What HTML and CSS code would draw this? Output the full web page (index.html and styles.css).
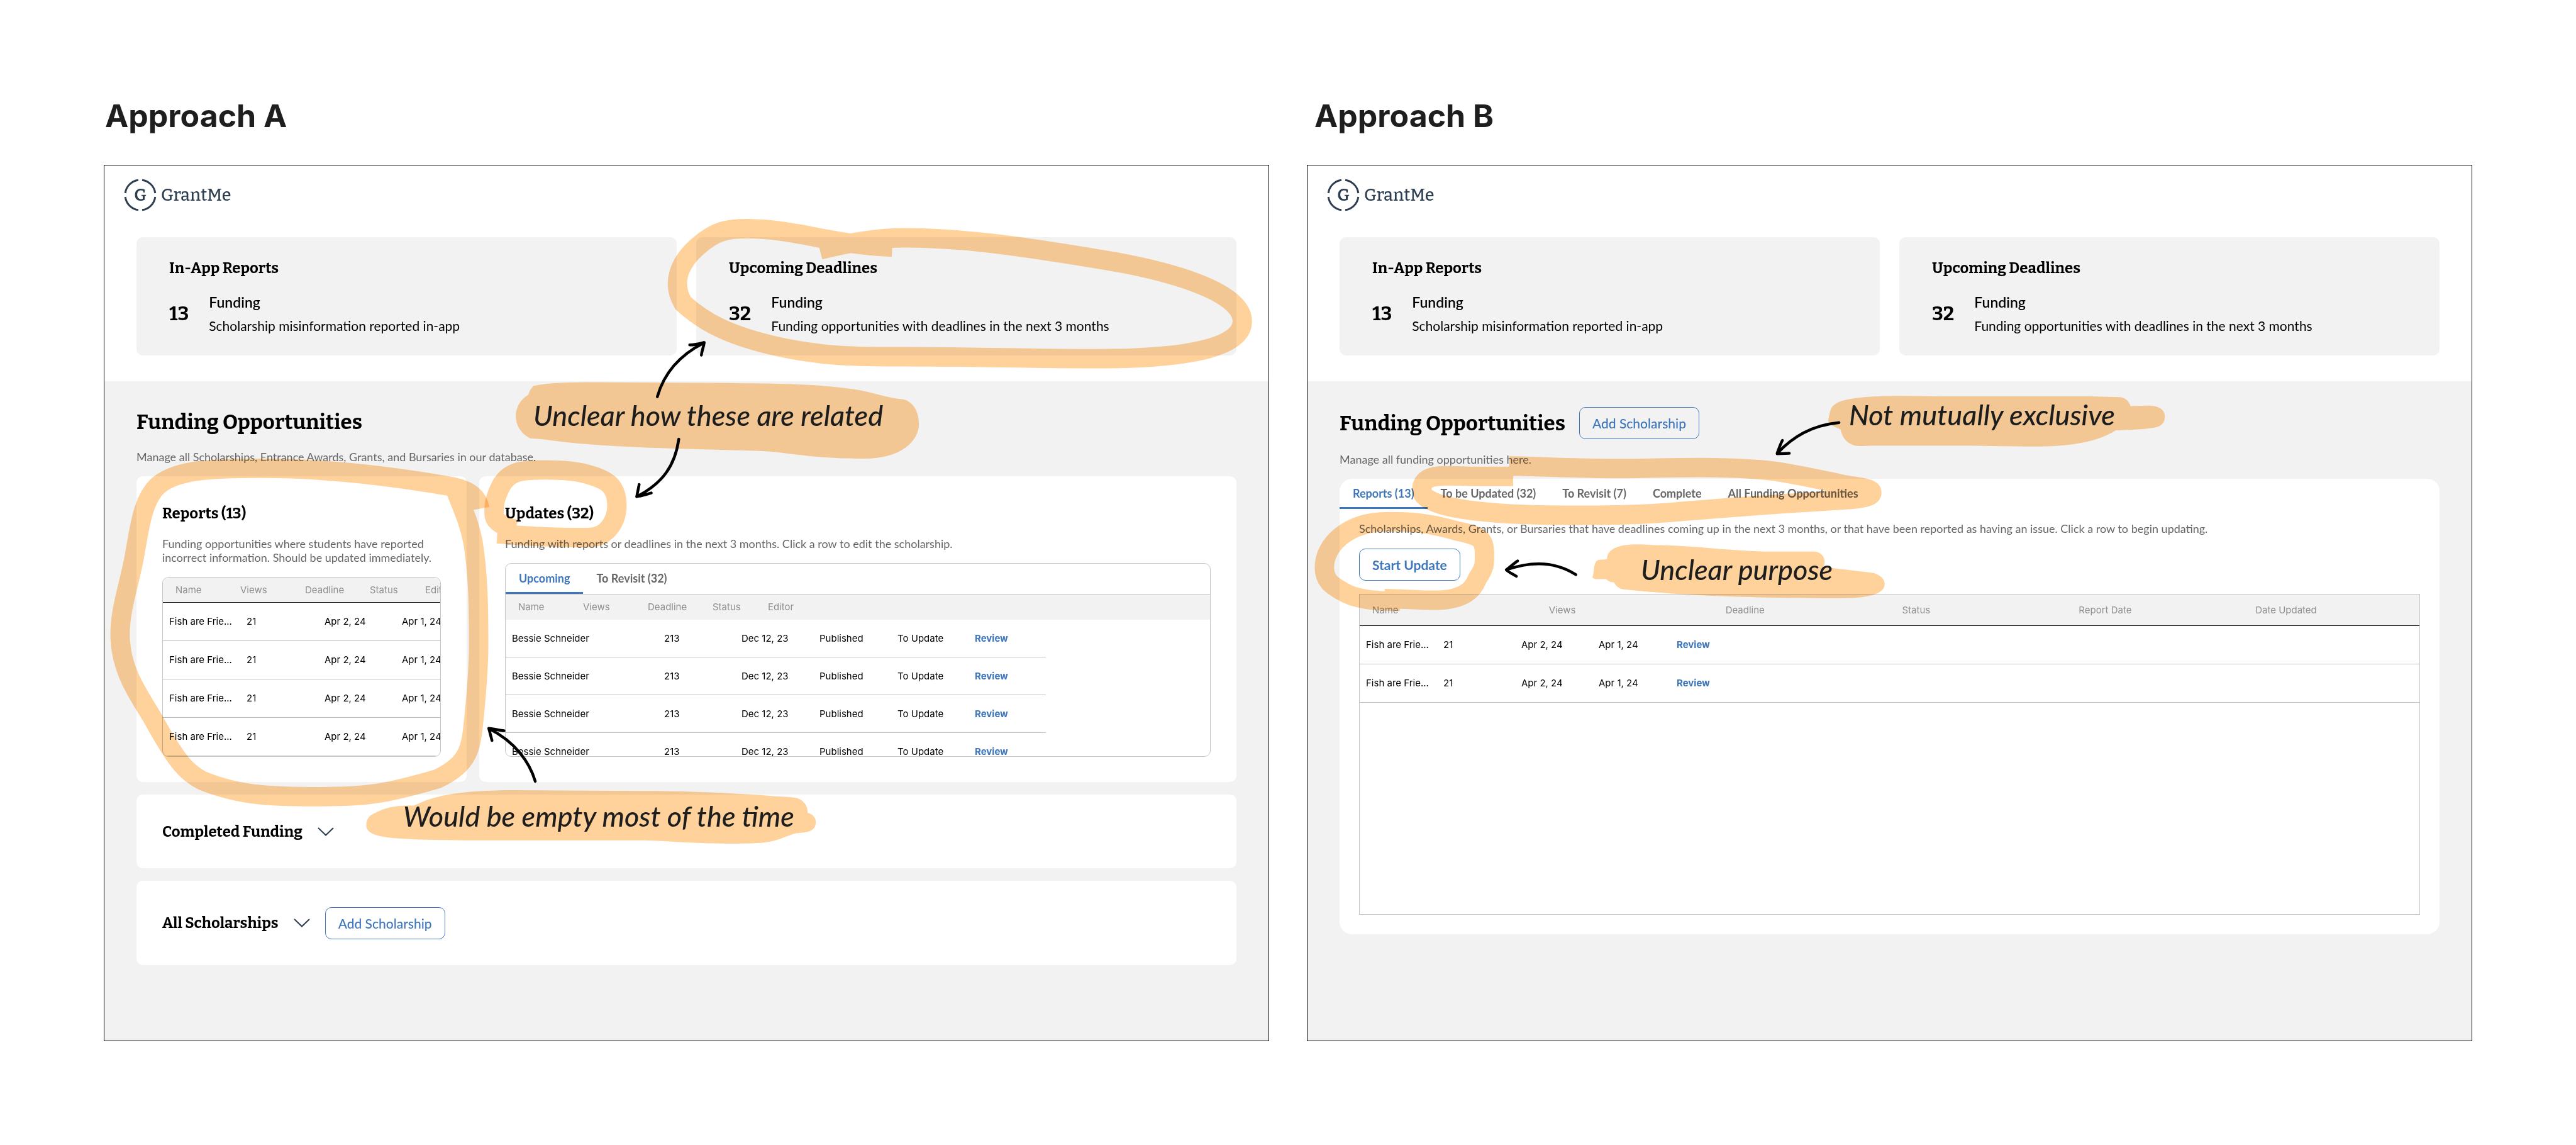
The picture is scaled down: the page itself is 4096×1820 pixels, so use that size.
FILE: index.html
```html
<!DOCTYPE html>
<html lang="en">
<head>
<meta charset="utf-8">
<title>GrantMe – Funding Opportunities approaches</title>
<link rel="stylesheet" href="styles.css">
</head>
<body>
<main class="board">
  <section class="approach">
    <h1 class="approach-title">Approach A</h1>
    <div class="frame">
      <header class="topbar">
        <svg class="logo-mark" viewBox="0 0 52 52" aria-hidden="true">
          <path d="M29 2.2A24 24 0 0 1 49.8 23M49.8 29A24 24 0 0 1 29 49.8M23 49.8A24 24 0 0 1 2.2 29M2.2 23A24 24 0 0 1 23 2.2"/>
          <text x="26" y="35">G</text>
        </svg>
        <span class="logo-name">GrantMe</span>
      </header>
      <div class="stats">
        <article class="stat">
          <h2 class="card-title">In-App Reports</h2>
          <div class="stat-row">
            <span class="stat-number">13</span>
            <div class="stat-text">
              <h3 class="stat-label">Funding</h3>
              <p class="stat-note">Scholarship misinformation reported in-app</p>
            </div>
          </div>
        </article>
        <article class="stat">
          <h2 class="card-title">Upcoming Deadlines</h2>
          <div class="stat-row">
            <span class="stat-number">32</span>
            <div class="stat-text">
              <h3 class="stat-label">Funding</h3>
              <p class="stat-note">Funding opportunities with deadlines in the next 3 months</p>
            </div>
          </div>
        </article>
      </div>
      <div class="content">
        <div class="heading-row">
          <h2 class="heading">Funding Opportunities</h2>
        </div>
        <p class="note subtitle">Manage all Scholarships, Entrance Awards, Grants, and Bursaries in our database.</p>
        <div class="stack">
          <div class="split">
            <article class="card">
              <h3 class="card-title">Reports (13)</h3>
              <p class="note">Funding opportunities where students have reported incorrect information. Should be updated immediately.</p>
              <div class="table-box reports-box">
                <table class="grid-table ruled tall">
                  <thead><tr><th>Name</th><th>Views</th><th>Deadline</th><th>Status</th><th>Editor</th></tr></thead>
                  <tbody>
                    <tr><td>Fish are Frie...</td><td>21</td><td>Apr 2, 24</td><td>Apr 1, 24</td></tr>
                    <tr><td>Fish are Frie...</td><td>21</td><td>Apr 2, 24</td><td>Apr 1, 24</td></tr>
                    <tr><td>Fish are Frie...</td><td>21</td><td>Apr 2, 24</td><td>Apr 1, 24</td></tr>
                    <tr><td>Fish are Frie...</td><td>21</td><td>Apr 2, 24</td><td>Apr 1, 24</td></tr>
                  </tbody>
                </table>
              </div>
            </article>
            <article class="card">
              <h3 class="card-title">Updates (32)</h3>
              <p class="note">Funding with reports or deadlines in the next 3 months. Click a row to edit the scholarship.</p>
              <div class="table-box updates-box">
                <div class="tabs boxed" role="tablist">
                  <button class="tab active" role="tab" aria-selected="true">Upcoming</button>
                  <button class="tab" role="tab" aria-selected="false">To Revisit (32)</button>
                </div>
                <table class="grid-table updates">
                  <thead><tr><th>Name</th><th>Views</th><th>Deadline</th><th>Status</th><th>Editor</th></tr></thead>
                  <tbody>
                    <tr><td>Bessie Schneider</td><td>213</td><td>Dec 12, 23</td><td>Published</td><td>To Update</td><td><a class="review" href="#">Review</a></td></tr>
                    <tr><td>Bessie Schneider</td><td>213</td><td>Dec 12, 23</td><td>Published</td><td>To Update</td><td><a class="review" href="#">Review</a></td></tr>
                    <tr><td>Bessie Schneider</td><td>213</td><td>Dec 12, 23</td><td>Published</td><td>To Update</td><td><a class="review" href="#">Review</a></td></tr>
                    <tr><td>Bessie Schneider</td><td>213</td><td>Dec 12, 23</td><td>Published</td><td>To Update</td><td><a class="review" href="#">Review</a></td></tr>
                  </tbody>
                </table>
              </div>
            </article>
          </div>
          <article class="card fold">
            <h3 class="card-title">Completed Funding</h3>
            <svg class="chevron" viewBox="0 0 26 14" aria-hidden="true"><path d="M1 1L13 12.500L25 1"/></svg>
          </article>
          <article class="card fold fold-tall">
            <h3 class="card-title">All Scholarships</h3>
            <svg class="chevron" viewBox="0 0 26 14" aria-hidden="true"><path d="M1 1L13 12.500L25 1"/></svg>
            <button class="button">Add Scholarship</button>
          </article>
        </div>
      </div>
    </div>
  </section>

  <section class="approach approach-b">
    <h1 class="approach-title">Approach B</h1>
    <div class="frame">
      <header class="topbar">
        <svg class="logo-mark" viewBox="0 0 52 52" aria-hidden="true">
          <path d="M29 2.2A24 24 0 0 1 49.8 23M49.8 29A24 24 0 0 1 29 49.8M23 49.8A24 24 0 0 1 2.2 29M2.2 23A24 24 0 0 1 23 2.2"/>
          <text x="26" y="35">G</text>
        </svg>
        <span class="logo-name">GrantMe</span>
      </header>
      <div class="stats">
        <article class="stat">
          <h2 class="card-title">In-App Reports</h2>
          <div class="stat-row">
            <span class="stat-number">13</span>
            <div class="stat-text">
              <h3 class="stat-label">Funding</h3>
              <p class="stat-note">Scholarship misinformation reported in-app</p>
            </div>
          </div>
        </article>
        <article class="stat">
          <h2 class="card-title">Upcoming Deadlines</h2>
          <div class="stat-row">
            <span class="stat-number">32</span>
            <div class="stat-text">
              <h3 class="stat-label">Funding</h3>
              <p class="stat-note">Funding opportunities with deadlines in the next 3 months</p>
            </div>
          </div>
        </article>
      </div>
      <div class="content">
        <div class="heading-row">
          <h2 class="heading">Funding Opportunities</h2>
          <button class="button">Add Scholarship</button>
        </div>
        <p class="note subtitle">Manage all funding opportunities here.</p>
        <article class="panel">
          <div class="tabs" role="tablist">
            <button class="tab active" role="tab" aria-selected="true">Reports (13)</button>
            <button class="tab" role="tab" aria-selected="false">To be Updated (32)</button>
            <button class="tab" role="tab" aria-selected="false">To Revisit (7)</button>
            <button class="tab" role="tab" aria-selected="false">Complete</button>
            <button class="tab" role="tab" aria-selected="false">All Funding Opportunities</button>
          </div>
          <div class="panel-body">
            <p class="note">Scholarships, Awards, Grants, or Bursaries that have deadlines coming up in the next 3 months, or that have been reported as having an issue. Click a row to begin updating.</p>
            <button class="button strong">Start Update</button>
            <div class="table-box wide-box">
              <table class="grid-table ruled tall wide">
                <thead><tr><th>Name</th><th>Views</th><th>Deadline</th><th>Status</th><th>Report Date</th><th>Date Updated</th></tr></thead>
                <tbody>
                  <tr><td>Fish are Frie...</td><td>21</td><td>Apr 2, 24</td><td>Apr 1, 24</td><td><a class="review" href="#">Review</a></td></tr>
                  <tr><td>Fish are Frie...</td><td>21</td><td>Apr 2, 24</td><td>Apr 1, 24</td><td><a class="review" href="#">Review</a></td></tr>
                </tbody>
              </table>
            </div>
          </div>
        </article>
      </div>
    </div>
  </section>

  <svg class="markup" viewBox="0 0 4096 1820">
    <g transform="scale(0.64281)">
      <g class="loops">
        <path d="M2028 618C2100 600 2170 588 2237 588C2396 588 2560 615 2714 640C2890 668 3073 720 3073 794C3073 870 2890 887 2714 887C2560 887 2400 882 2237 882C2120 882 2040 882 1928 858C1800 830 1740 795 1690 750C1660 700 1680 650 1725 610C1770 570 1800 563 1869 566C1980 570 2060 605 2207 611"/>
        <path d="M1187 1258C1180 1222 1150 1209 1110 1202C960 1176 800 1158 647 1158C520 1158 440 1162 394 1198C352 1232 345 1310 335 1360C325 1430 297 1500 297 1568C297 1660 345 1720 380 1780C440 1890 465 1912 500 1930C600 1972 700 1970 794 1970C900 1970 950 1965 1082 1926C1160 1890 1165 1850 1172 1780C1180 1700 1184 1650 1184 1596C1184 1500 1183 1420 1170 1340C1160 1290 1145 1260 1124 1205"/>
        <path d="M1230 1320C1300 1325 1380 1331 1460 1329C1500 1328 1526 1290 1526 1250C1526 1200 1500 1185 1450 1172C1420 1164 1380 1162 1349 1162C1290 1162 1260 1165 1240 1200C1222 1235 1222 1250 1222 1270C1222 1285 1235 1300 1276 1309"/>
        <path d="M3733 1152C3850 1155 3950 1161 4061 1158C4200 1155 4300 1154 4396 1166C4480 1180 4520 1190 4550 1196C4590 1205 4630 1205 4630 1218C4630 1236 4560 1236 4500 1240C4330 1250 4250 1258 4157 1265C4050 1275 3950 1274 3870 1274C3700 1274 3517 1260 3517 1212C3517 1165 3580 1178 3650 1178L3743 1178"/>
        <path d="M3425 1480C3480 1481 3520 1485 3563 1484C3640 1480 3650 1440 3655 1430C3675 1400 3672 1390 3672 1370C3672 1330 3660 1325 3600 1312C3530 1292 3490 1290 3434 1290C3330 1290 3276 1350 3276 1403C3276 1440 3300 1450 3320 1462C3350 1482 3400 1486 3463 1487"/>
      </g>
      <g class="blobs">
        <path d="M1321 954C1360 946 1400 946 1450 945L1800 947C1900 949 2040 947 2147 969C2190 980 2205 984 2232 987C2260 992 2273 1020 2273 1048C2273 1090 2230 1134 2137 1134C2000 1134 1950 1118 1879 1115L1700 1110C1560 1106 1450 1102 1340 1086C1325 1084 1318 1086 1310 1083C1265 1060 1265 1000 1307 976C1310 965 1316 957 1321 954Z"/>
        <path d="M906 2041C906 2022 918 2014 929 2010C950 1998 975 1991 1024 1992C1060 1975 1110 1954 1273 1954L1618 1956C1750 1957 1850 1964 1962 1972C1985 1974 1998 1990 1998 2010C2012 2014 2018 2022 2018 2033C2018 2052 2005 2059 1971 2060C1945 2066 1930 2078 1893 2083C1870 2086 1830 2086 1801 2086C1700 2086 1650 2078 1572 2078L1273 2078C1180 2078 1100 2078 1044 2076C960 2073 906 2070 906 2041Z"/>
        <path d="M4522 1040C4526 1025 4526 1006 4540 999C4560 984 4630 979 4698 979L4797 980L5170 980L5245 982C5260 984 5268 996 5270 1004L5310 1003C5345 1002 5355 1016 5355 1030C5355 1042 5350 1052 5336 1056C5310 1062 5270 1063 5234 1064C5180 1097 5110 1104 5030 1104C4980 1104 4920 1102 4864 1102L4632 1102C4615 1102 4605 1104 4590 1102C4565 1096 4556 1078 4553 1062C4538 1055 4525 1050 4522 1040Z"/>
        <path d="M3939 1428C3945 1412 3940 1384 3958 1384L3975 1383C3975 1362 3995 1346 4050 1346C4080 1346 4090 1349 4109 1348C4210 1351 4300 1364 4386 1364L4485 1364C4510 1364 4518 1384 4511 1402L4635 1417C4655 1424 4662 1434 4662 1444C4662 1460 4645 1479 4558 1479C4480 1479 4410 1478 4348 1477C4260 1475 4130 1470 4013 1457C3998 1452 3996 1445 3992 1440C3982 1440 3978 1436 3973 1432L3945 1432Z"/>
      </g>
      <g class="arrows">
        <path d="M1626 981C1642 925 1678 880 1741 848M1741 847C1730 850 1718 853 1706 853M1742 847C1740 860 1736 868 1735 878"/>
        <path d="M1679 1086C1670 1150 1640 1195 1575 1228M1575 1228L1581 1198M1575 1228C1588 1226 1600 1222 1611 1219"/>
        <path d="M1324 1932C1310 1885 1275 1835 1210 1802M1209 1801C1222 1802 1235 1806 1247 1807M1209 1801L1217 1831"/>
        <path d="M4549 1045C4480 1052 4435 1080 4396 1121M4396 1121C4400 1110 4404 1098 4409 1089M4396 1122L4426 1121"/>
        <path d="M3898 1421C3850 1390 3795 1385 3726 1409M3726 1409C3735 1402 3745 1393 3754 1387M3726 1409C3734 1417 3744 1420 3751 1425"/>
      </g>
    </g>
    <text class="hand" x="848" y="677">Unclear how these are related</text>
    <text class="hand" x="641" y="1314">Would be empty most of the time</text>
    <text class="hand" x="2940" y="676">Not mutually exclusive</text>
    <text class="hand" x="2609" y="922">Unclear purpose</text>
  </svg>
</main>
</body>
</html>
```
FILE: styles.css
```css
* { box-sizing: border-box; margin: 0; padding: 0; }

:root {
  --grey: #f2f2f2;
  --line: #c6c6c6;
  --blue: #3d76bd;
  --navy: #2c3e50;
  --slab: "Bitter", "DejaVu Serif Condensed", "DejaVu Serif", serif;
}

body { background: #fff; color: #000; font-family: Lato, sans-serif; }
button { font: inherit; background: none; border: 0; cursor: pointer; }
table { border-spacing: 0; }

.board {
  position: relative;
  display: grid;
  grid-template-columns: 1fr 1fr;
  gap: 60px;
  padding: 154px 165px 165px;
  isolation: isolate;
  background: #fff;
}
.approach { display: flex; flex-direction: column; min-width: 0; }
.approach-title {
  font: 700 50px/60px Inter, sans-serif;
  color: #1e1e1e;
  padding-left: 2px;
  margin-bottom: 48px;
}
.approach-b .approach-title { padding-left: 12px; }

.frame { flex: 1; display: flex; flex-direction: column; border: 1px solid #000; }
.topbar { display: flex; align-items: center; gap: 7px; padding: 21px 31px; height: 94px; }
.logo-mark { width: 52px; height: 52px; }
.logo-mark path { fill: none; stroke: var(--navy); stroke-width: 3; }
.logo-mark text { font: 600 27px var(--slab); fill: var(--navy); text-anchor: middle; }
.logo-name { font: 500 27px/30px var(--slab); color: var(--navy); }

.stats { display: grid; grid-template-columns: 1fr 1fr; gap: 31px; padding: 20px 51px 41px; }
.stat { background: var(--grey); border-radius: 10px; padding: 34px 52px 33px; }
.card-title { font: 700 24px/30px var(--slab); white-space: nowrap; }
.stat-row { display: flex; align-items: center; gap: 32px; margin-top: 25px; }
.stat-number { font: 700 31px/36px var(--slab); }
.stat-text { display: grid; gap: 10px; }
.stat-label { font-size: 23px; line-height: 28px; font-weight: 600; }
.stat-note { font-size: 21px; line-height: 28px; }

.content { flex: 1; background: var(--grey); padding: 41px 51px 120px; }
.heading-row { display: flex; align-items: center; gap: 22px; min-height: 47px; }
.heading { font: 700 33px/40px var(--slab); white-space: nowrap; }
.note { font-size: 18px; line-height: 22px; color: #666; }
.subtitle { margin: 21px 0 20px; }

.stack { display: grid; gap: 20px; }
.split { display: grid; grid-template-columns: 525fr 1204fr; gap: 20px; }
.card { background: #fff; border-radius: 10px; padding: 44px 41px 40px; min-width: 0; }
.card .note { margin: 22px 0 20px; }
.fold { display: flex; align-items: center; gap: 24px; padding: 0 41px; min-height: 117px; }
.fold-tall { min-height: 134px; }
.chevron { width: 26px; height: 14px; fill: none; stroke: var(--navy); stroke-width: 2; }

.button {
  height: 51px;
  padding: 0 20px;
  border: 1px solid var(--blue);
  border-radius: 10px;
  color: var(--blue);
  font-size: 21px;
  font-weight: 500;
}
.strong { font-weight: 700; }

.table-box { border: 1px solid var(--line); border-radius: 10px; overflow: hidden; }
.updates-box { height: 308px; }
.wide-box { width: 100%; height: 510px; border-radius: 0; }

.tabs { display: flex; }
.boxed { border-bottom: 1px solid var(--line); }
.tab {
  padding: 12px 21px 11px;
  border-bottom: 3px solid transparent;
  color: #666;
  font-size: 18px;
  line-height: 22px;
  font-weight: 700;
  white-space: nowrap;
}
.tab.active { color: var(--blue); border-bottom-color: var(--blue); }

.grid-table { display: block; font: 400 15px/20px Inter, sans-serif; white-space: nowrap; }
.grid-table thead, .grid-table tbody { display: block; }
.grid-table tr { display: grid; align-items: center; }
.grid-table th { font-weight: 400; color: #909090; text-align: left; }
.grid-table thead tr {
  grid-template-columns: 103px 103px 103px 88px auto;
  height: 40px;
  padding-left: 20px;
  background: var(--grey);
}
.grid-table tbody tr {
  grid-template-columns: 123px 124px 123px 124px 1fr;
  height: 60px;
  padding-left: 10px;
  border-bottom: 1px solid #bfbfbf;
}
.tall tbody tr { height: 61px; }
.ruled thead tr { border-bottom: 1px solid #000; }
.updates tbody tr { grid-template-columns: 242px 123px 124px 124px 123px 112px; width: 859px; }
.wide thead tr { grid-template-columns: repeat(6, 1fr); height: 50px; padding-left: 0; }
.wide th { padding-left: 20px; }
.review { color: var(--blue); font-weight: 700; text-decoration: none; }

.panel { background: #fff; border-radius: 20px; }
.panel-body { display: grid; justify-items: start; gap: 21px; padding: 20px 31px 31px; }

.markup {
  position: absolute;
  top: 0;
  left: 0;
  width: 100%;
  mix-blend-mode: multiply;
  pointer-events: none;
}
.loops path { fill: none; stroke: #ffd29c; stroke-width: 48; mix-blend-mode: multiply; }
.blobs path { fill: #ffd29c; }
.arrows path { fill: none; stroke: #000; stroke-width: 7; stroke-linecap: round; stroke-linejoin: round; }
.hand { font: italic 500 45px Lato, cursive; fill: #1e1e1e; }
```
